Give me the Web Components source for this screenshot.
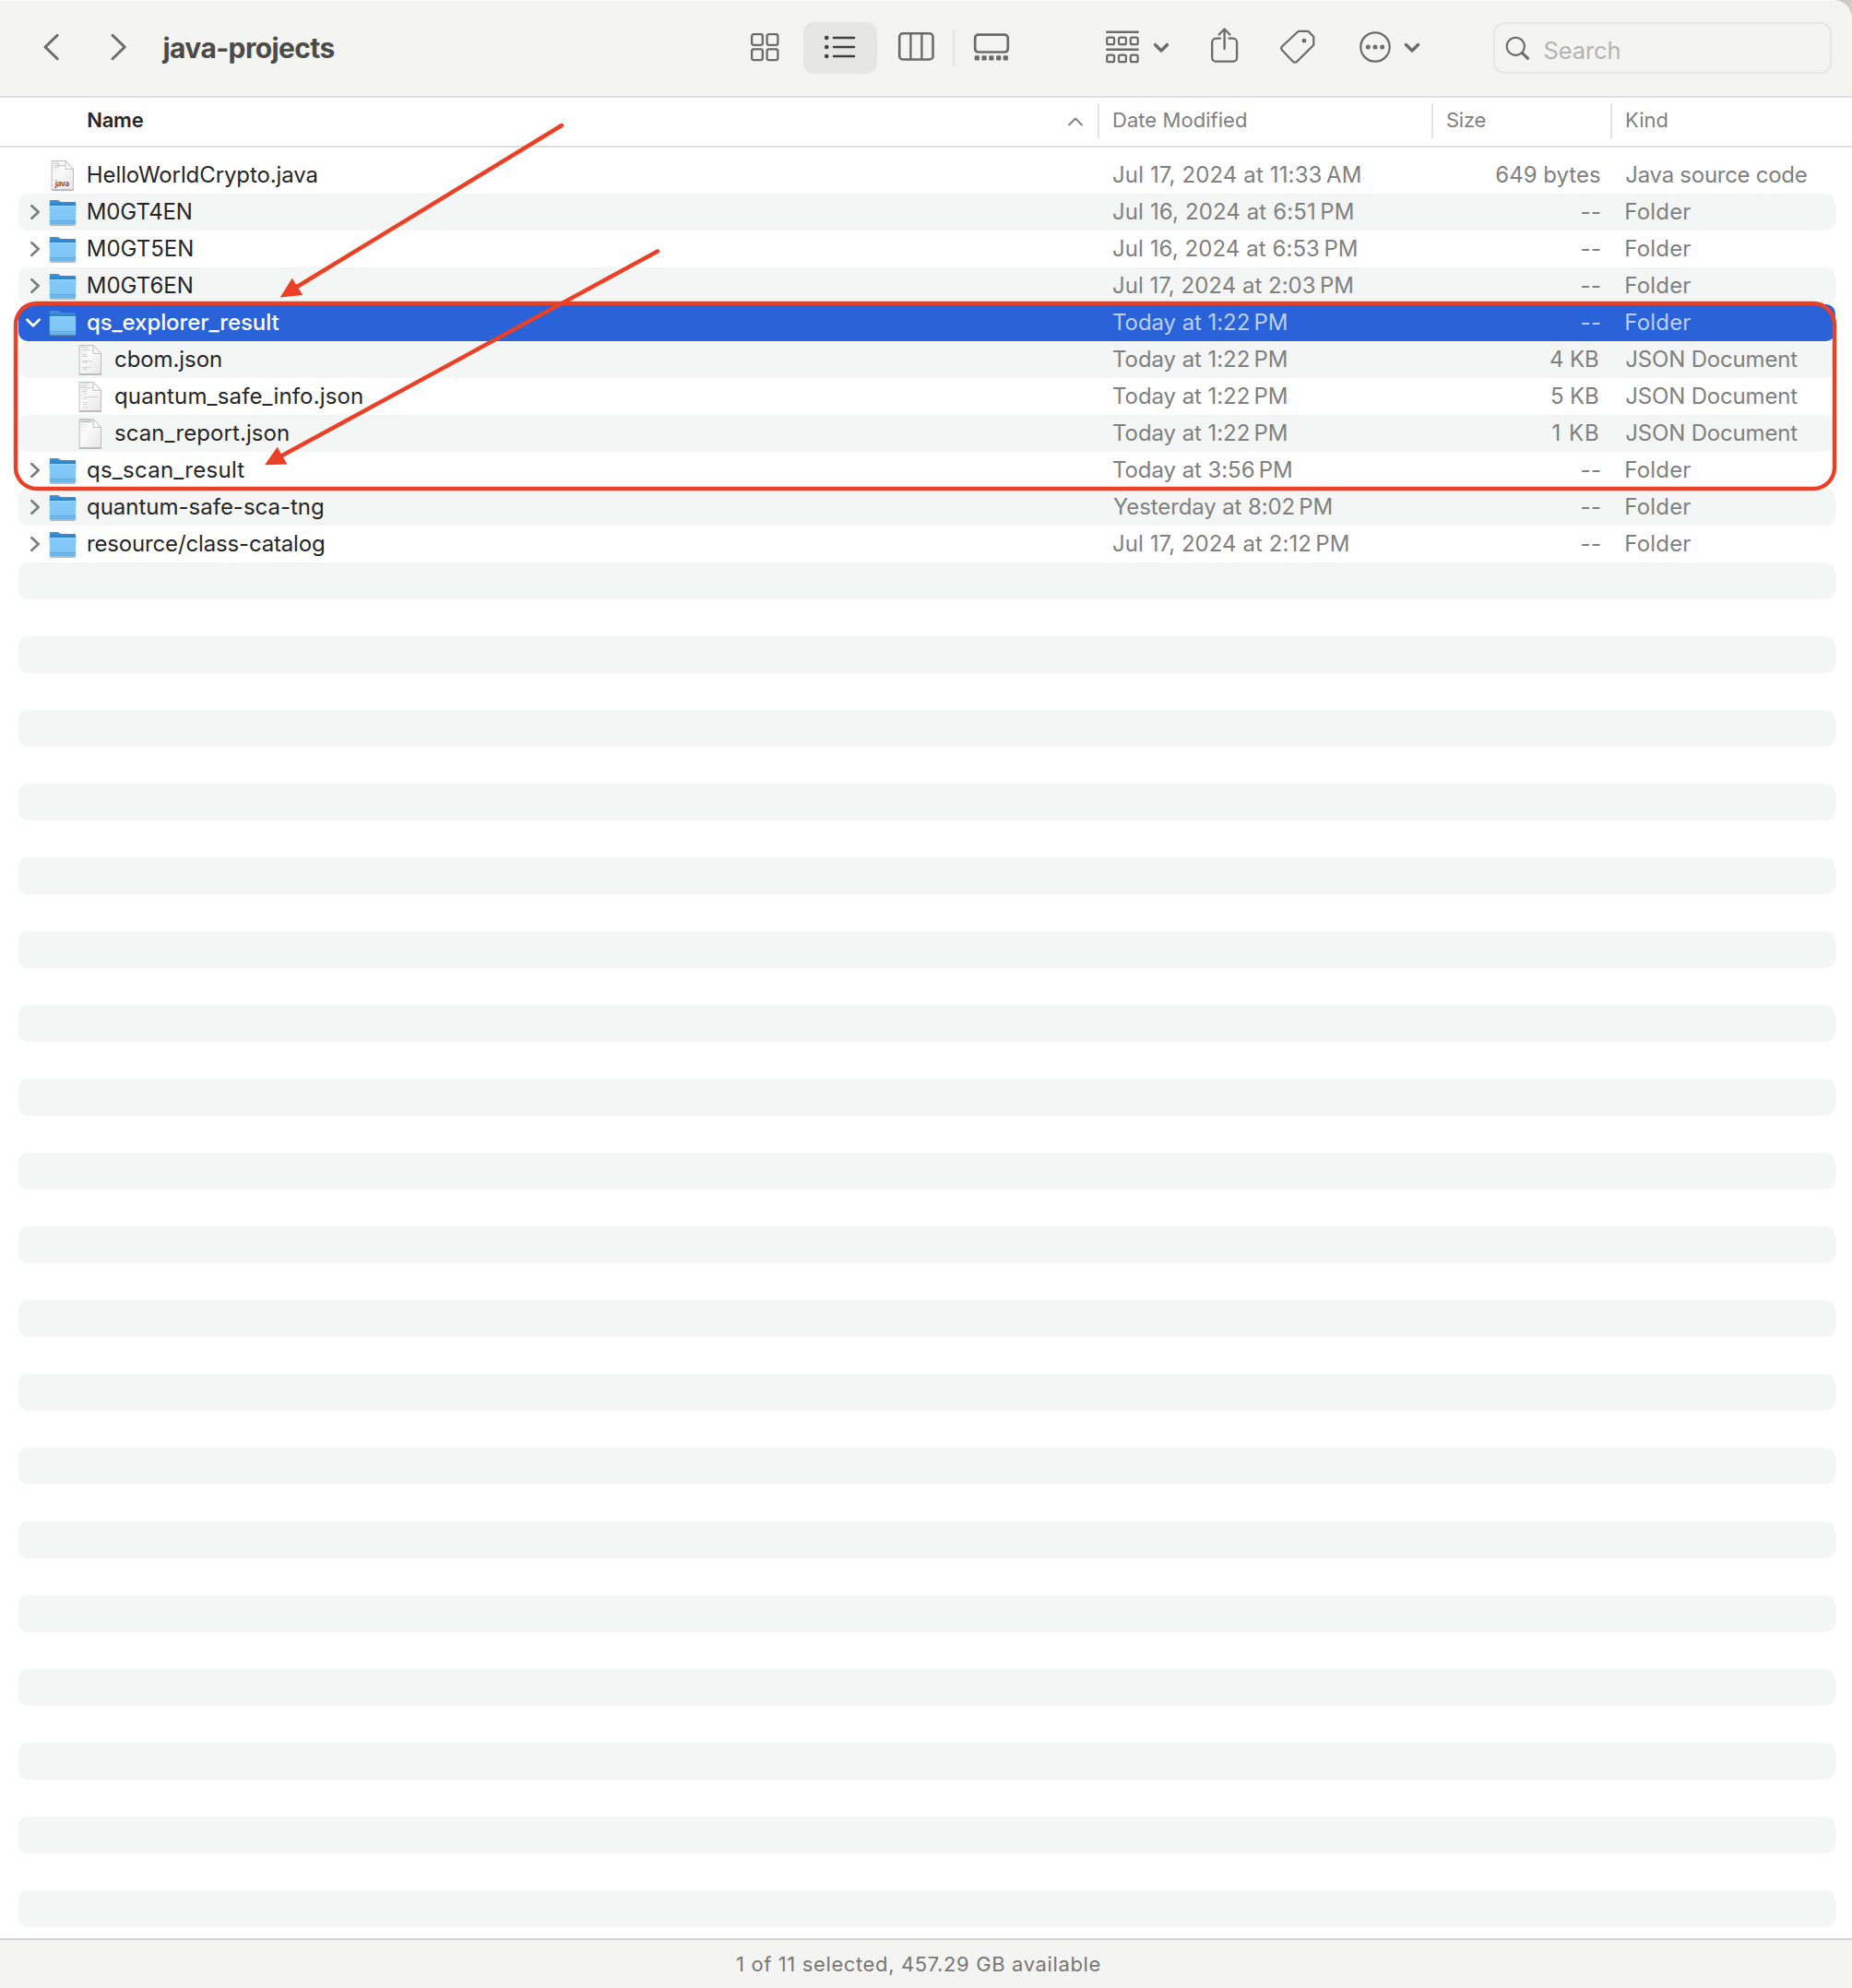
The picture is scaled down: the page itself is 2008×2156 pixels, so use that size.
<!DOCTYPE html>
<html lang="en">
<head>
<meta charset="utf-8">
<title>java-projects</title>
<style>
html,body{margin:0;padding:0;background:#cfccc8}
body{width:2008px;height:2156px;overflow:hidden;font-family:Inter,"Liberation Sans",sans-serif}
</style>
</head>
<body>
<finder-window></finder-window>
<script>
const ctx = document.createElement('canvas').getContext('2d');

// A run of text whose visible width is set by the "ink" attribute.
class FitText extends HTMLElement {
  connectedCallback() {
    const root = this.attachShadow({mode: 'open'});
    root.innerHTML = '<style>:host{display:block;white-space:pre;flex:none}</style><slot></slot>';
    const cs = getComputedStyle(this), text = this.textContent;
    ctx.font = `${cs.fontWeight} ${cs.fontSize} ${cs.fontFamily}`;
    const m = ctx.measureText(text);
    const ink = m.actualBoundingBoxRight + m.actualBoundingBoxLeft;
    const ls = (parseFloat(this.getAttribute('ink')) - ink) / (text.length - 1);
    this.style.letterSpacing = ls.toFixed(4) + 'px';
    this.style.marginLeft = m.actualBoundingBoxLeft.toFixed(3) + 'px';
    this.style.marginRight = (m.actualBoundingBoxRight - m.width - ls).toFixed(3) + 'px';
  }
}

const svg = (w, h, body) => `<svg width="${w}" height="${h}" viewBox="0 0 ${w} ${h}" fill="none" stroke="currentColor" stroke-linecap="round" stroke-linejoin="round">${body}</svg>`;
const doc = extra => svg(32, 36, `
  <defs><linearGradient id="p" x1="0" y1="0" x2="1" y2="1"><stop offset="0" stop-color="#ececec"/><stop offset=".4" stop-color="#fbfbfb"/><stop offset="1" stop-color="#e6e6e6"/></linearGradient></defs>
  <path d="M4.500 34h23" stroke="#8a8a8a" stroke-width="1.600" opacity=".75"/>
  <path d="M4.500 2.500h14l9 9v22h-23z" fill="url(#p)" stroke="#bdbdbd" stroke-width="1"/>
  ${extra}
  <path d="M19 2.800v8.500h8.300z" fill="#fff" stroke="#bdbdbd" stroke-width="1"/>`);
const lines = (ys, c = '#bcbcbc') => ys.map(([x, y, w]) => `<path d="M${x} ${y}h${w}" stroke="${c}" stroke-width=".9" stroke-linecap="butt"/>`).join('');
const ICONS = {
  back: svg(24, 36, '<path d="M18.200 5.250 5 18l13.200 12.750" stroke-width="3"/>'),
  forward: svg(24, 36, '<path d="M5 5.250 18.200 18 5 30.750" stroke-width="3"/>'),
  grid: svg(32, 32, '<g stroke-width="2.300"><rect x="2.150" y="2.150" width="11.700" height="11.700" rx="2"/><rect x="18.650" y="2.150" width="11.700" height="11.700" rx="2"/><rect x="2.150" y="18.350" width="11.700" height="11.700" rx="2"/><rect x="18.650" y="18.350" width="11.700" height="11.700" rx="2"/></g>'),
  list: svg(36, 28, '<g fill="currentColor" stroke="none"><circle cx="3.200" cy="4" r="2.300"/><circle cx="3.200" cy="14" r="2.300"/><circle cx="3.200" cy="24" r="2.300"/></g><path d="M11 4h22M11 14h22M11 24h22" stroke-width="2.600"/>'),
  columns: svg(40, 32, '<rect x="2.200" y="2.200" width="36.300" height="28.300" rx="3.800" stroke-width="2.600"/><path d="M14.400 3v27M26.400 3v27" stroke-width="2.400"/>'),
  gallery: svg(40, 32, '<rect x="2.200" y="2.700" width="35.600" height="18.800" rx="3.500" stroke-width="2.700"/><g fill="currentColor" stroke="none"><rect x="1.700" y="25.300" width="5.200" height="5.200" rx=".8"/><rect x="9.500" y="25.300" width="5.200" height="5.200" rx=".8"/><rect x="17.300" y="25.300" width="5.200" height="5.200" rx=".8"/><rect x="25.100" y="25.300" width="5.200" height="5.200" rx=".8"/><rect x="32.700" y="25.300" width="5.200" height="5.200" rx=".8"/></g>'),
  group: svg(38, 38, `<path d="M2.200 2.800h33.500M2.200 21.800h33.500" stroke-width="2.400"/><g stroke-width="2.200">${[8.6, 27.6].map(y => [2.2, 15, 27.8].map(x => `<rect x="${x}" y="${y}" width="7.900" height="7.600" rx="1.800"/>`).join('')).join('')}</g>`),
  chevron: svg(18, 12, '<path d="m2.500 2.500 6.500 6.500 6.500-6.500" stroke-width="3.300"/>'),
  share: svg(32, 40, '<path d="M11 12.700H6.500a4.300 4.300 0 0 0-4.300 4.300v16.400a4.300 4.300 0 0 0 4.300 4.300h18.300a4.300 4.300 0 0 0 4.300-4.300V17a4.300 4.300 0 0 0-4.300-4.300H20.500M15.600 24V3.500M9.700 8.500l5.900-6 5.900 6" stroke-width="2.300"/>'),
  tag: svg(40, 40, '<path d="m20.300 3.300-17.100 16a3 3 0 0 0 0 4.200l11.700 12.200a3 3 0 0 0 4.300 0l17.600-17.500a2 2 0 0 0 .5-1.300V9.700a2 2 0 0 0-.6-1.400l-4.600-4.800a2 2 0 0 0-1.400-.6h-9a2 2 0 0 0-1.400.4z" stroke-width="2.200"/><circle cx="27" cy="13.200" r="2.400" fill="currentColor" stroke="none"/>'),
  more: svg(36, 36, '<circle cx="18" cy="18" r="15.700" stroke-width="2.200"/><g fill="currentColor" stroke="none"><circle cx="10.300" cy="18" r="2.500"/><circle cx="18" cy="18" r="2.500"/><circle cx="25.700" cy="18" r="2.500"/></g>'),
  search: svg(28, 28, '<circle cx="12.300" cy="12.300" r="9.600" stroke-width="2.100"/><path d="m19.300 19.300 6.300 6" stroke-width="3"/>'),
  sort: svg(18, 12, '<path d="m2 9.500 7-7 7 7" stroke-width="1.900"/>'),
  closed: svg(14, 20, '<path d="m3.400 3.200 7.300 6.800-7.300 6.800" stroke-width="2.700"/>'),
  open: svg(20, 14, '<path d="m3.400 3.700 6.600 6.600 6.600-6.600" stroke-width="2.700"/>'),
  folder: svg(32, 32, `<defs><linearGradient id="b" x1="0" y1="0" x2="0" y2="1"><stop offset="0" stop-color="#3f97da"/><stop offset="1" stop-color="#1f63b4"/></linearGradient><linearGradient id="f" x1="0" y1="0" x2="0" y2="1"><stop offset="0" stop-color="#86cbf8"/><stop offset=".78" stop-color="#7fc6f6"/><stop offset="1" stop-color="#5fade2"/></linearGradient></defs>
    <path d="M3 29.200h26" stroke="#777" stroke-width="1.500" opacity=".5"/>
    <path d="M1.800 14V3.200Q1.800 2.100 3 2.100h7.500q.8 0 1.400.5l1.200 1q.5.500 1.300.5h14.600Q30.200 4.100 30.200 5.300V14z" fill="url(#b)" stroke="none"/>
    <path d="M1.800 8.500h28.400V27.300q0 1.200-1.200 1.200H3Q1.800 28.500 1.800 27.300z" fill="url(#f)" stroke="none"/><path d="M2.500 8.500h27" stroke="#9cd8fb" stroke-width="1"/>
    <path d="M1.800 24.700h28.400" stroke="#4f9dd4" stroke-width="1" stroke-linecap="butt" opacity=".7"/>`),
  java: doc(lines([[7, 5.500, 5], [9, 7.500, 9], [7, 9, 5]]) + '<text x="7.700" y="29.500" font-family="Noto Sans,sans-serif" font-size="8.500" font-weight="600" textLength="15.500" fill="#a8262c" stroke="none">java</text>'),
  json1: doc(lines([[6, 4.500, 8], [7, 7.500, 9], [7, 12.500, 5], [7, 14.500, 6], [7, 19.500, 11], [7, 21, 6], [7, 26.500, 9], [7, 28.500, 5]], '#cbcbcb')),
  json2: doc(lines([[7, 4, 8], [6, 6.500, 6], [5, 8.500, 13], [9, 10.500, 4], [7, 12.500, 5], [9, 15, 4], [8, 18.500, 17], [8, 20.500, 5], [8, 24.500, 5], [8, 26.500, 4], [8, 30, 6]], '#cecece')),
  json3: doc(lines([[5, 4, 13], [6, 5.500, 11]], '#b5b5b5'))
};
class UiIcon extends HTMLElement {
  connectedCallback() {
    this.attachShadow({mode: 'open'}).innerHTML = `<style>:host{display:block;flex:none}svg{display:block}</style>${ICONS[this.getAttribute('name')]}`;
  }
}

class FinderToolbar extends HTMLElement {
  connectedCallback() {
    this.attachShadow({mode: 'open'}).innerHTML = `<style>
      :host{display:flex;height:104px;box-sizing:border-box;background:#f4f4f2;border-top:1px solid #fbfbfb;padding-bottom:1px;color:#6b6b69;align-items:center;flex:none}
      .back{margin:0 0 2.500px 43.500px}.fwd{margin:0 0 2.500px 49px}
      h1{margin:0 0 1px 35px;width:186.500px;font-size:30px;line-height:36px;font-weight:700;color:#4b4b49}
      .views{display:flex;align-items:center;margin-left:451px;flex:none}
      .grid{margin-bottom:3px}
      .on{display:flex;align-items:center;justify-content:center;width:80px;height:56px;border-radius:11px;background:#e6e6e4;color:#3f3f3e;margin:0 22px 0 26px}
      .on ui-icon{margin-bottom:2.400px}
      .columns{margin-bottom:3.400px}
      .sep{width:2px;height:40px;background:#e4e4e2;margin:0 20px}
      .gallery{margin-bottom:3px}
      .group{margin:0 0 2.500px 103px}.c1{margin-left:14px}.share{margin:0 0 5.400px 44px}.tag{margin:0 0 1.500px 42.500px}.more{margin:0 0 2px 46.300px}.c2{margin-left:13.200px}
      .search{display:flex;align-items:center;width:367px;height:56px;box-sizing:border-box;border:2px solid #e6e6e4;border-radius:12px;margin-left:79px;padding-left:10px}
      .search fit-text{color:#b4b4b2;font-size:25.500px;line-height:32px;padding:5px 0 0 15.500px}
    </style>
    <ui-icon class="back" name="back"></ui-icon><ui-icon class="fwd" name="forward"></ui-icon>
    <h1><fit-text ink="187">java-projects</fit-text></h1>
    <div class="views"><ui-icon class="grid" name="grid"></ui-icon><div class="on"><ui-icon name="list"></ui-icon></div><ui-icon class="columns" name="columns"></ui-icon><div class="sep"></div><ui-icon class="gallery" name="gallery"></ui-icon></div>
    <ui-icon class="group" name="group"></ui-icon><ui-icon class="c1" name="chevron"></ui-icon>
    <ui-icon class="share" name="share"></ui-icon><ui-icon class="tag" name="tag"></ui-icon>
    <ui-icon class="more" name="more"></ui-icon><ui-icon class="c2" name="chevron"></ui-icon>
    <div class="search"><ui-icon name="search"></ui-icon><fit-text ink="82">Search</fit-text></div>`;
  }
}

class ColumnHeader extends HTMLElement {
  connectedCallback() {
    this.attachShadow({mode: 'open'}).innerHTML = `<style>
      :host{display:flex;height:56px;box-sizing:border-box;border-top:2px solid #dededd;border-bottom:2px solid #dededd;background:#fff;color:#80807f;font-size:22px;line-height:48px;font-weight:400;flex:none}
      div{box-sizing:border-box;display:flex}
      .name{width:1190px;padding-left:95.200px;color:#262626;font-weight:600;justify-content:space-between}
      .name ui-icon{color:#80807f;margin:20px 15.500px 0 0}
      .col{height:38px;margin-top:6px;border-left:2px solid #e3e3e3;line-height:36px;padding-left:15px}
      .date{width:362px}.size{width:194px}.kind{flex:1}
    </style>
    <div class="name"><fit-text ink="60.500">Name</fit-text><ui-icon name="sort"></ui-icon></div>
    <div class="col date"><fit-text ink="144">Date Modified</fit-text></div>
    <div class="col size"><fit-text ink="41.500">Size</fit-text></div>
    <div class="col kind"><fit-text ink="44.500">Kind</fit-text></div>`;
  }
}

class FileRow extends HTMLElement {
  connectedCallback() {
    const r = this.data, sel = r && r.sel, striped = this.hasAttribute('striped');
    const cell = (cls, v) => `<div class="${cls}"><fit-text ink="${v[1]}">${v[0]}</fit-text></div>`;
    const stem = r && /^[HM]/.test(r.name[0]) ? ' stem' : '';
    this.attachShadow({mode: 'open'}).innerHTML = `<style>
      :host{display:flex;height:40px;line-height:39px;margin:0 18px 0 20px;border-radius:10px;font-size:24px;color:#80807f;flex:none;background:${sel ? '#2962d9' : striped ? '#f4f6f5' : 'transparent'}}
      div{display:flex;box-sizing:border-box;flex:none}
      .toggle{width:32px;height:40px;align-items:center;justify-content:${sel ? 'flex-start' : 'center'};color:#7d7d7c}
      .toggle ui-icon{margin:${sel ? '0 0 0 6px' : '0 0 1px 3.600px'}}
      .icon{width:43px;height:40px;align-items:center}
      .icon.folder{padding-top:2px}
      .name{width:1112px;color:#262626}.date{width:428px}.size{width:100px;justify-content:flex-end}.kind{padding-left:28.300px}
      .stem{padding-left:.8px}
      .child{width:29.500px}
      .child~.name{width:1082.500px;padding-left:.5px}
      .size.kb{padding-right:2px}
      ${sel ? ':host{color:#bccff5}.toggle,.name{color:#fff}.name{font-weight:500}' : ''}
    </style>${r ? `
      <div class="toggle">${r.icon === 'folder' ? `<ui-icon name="${sel ? 'open' : 'closed'}"></ui-icon>` : ''}</div>
      ${r.child ? '<div class="child"></div>' : ''}
      <div class="icon ${r.icon}"><ui-icon name="${r.icon}"></ui-icon></div>
      ${cell('name' + stem, r.name)}${cell('date', r.date)}${cell(r.child ? 'size kb' : 'size', r.size)}${cell('kind', r.kind)}` : ''}`;
  }
}

const FOLDER = ['Folder', 70], JSON_DOC = ['JSON Document', 186], NONE = ['--', 20.5];
const FILES = [
  {icon: 'java', name: ['HelloWorldCrypto.java', 247.8], date: ['Jul 17, 2024 at 11:33\u202fAM', 267.7], size: ['649 bytes', 112.7], kind: ['Java source code', 195.5]},
  {icon: 'folder', name: ['M0GT4EN', 111], date: ['Jul 16, 2024 at 6:51\u202fPM', 259.7], size: NONE, kind: FOLDER},
  {icon: 'folder', name: ['M0GT5EN', 112.5], date: ['Jul 16, 2024 at 6:53\u202fPM', 263.8], size: NONE, kind: FOLDER},
  {icon: 'folder', name: ['M0GT6EN', 112], date: ['Jul 17, 2024 at 2:03\u202fPM', 259.3], size: NONE, kind: FOLDER},
  {icon: 'folder', sel: true, name: ['qs_explorer_result', 207.5], date: ['Today at 1:22\u202fPM', 187.8], size: NONE, kind: FOLDER},
  {icon: 'json1', child: true, name: ['cbom.json', 115], date: ['Today at 1:22\u202fPM', 187.8], size: ['4 KB', 52], kind: JSON_DOC},
  {icon: 'json2', child: true, name: ['quantum_safe_info.json', 268], date: ['Today at 1:22\u202fPM', 187.8], size: ['5 KB', 51], kind: JSON_DOC},
  {icon: 'json3', child: true, name: ['scan_report.json', 188], date: ['Today at 1:22\u202fPM', 187.8], size: ['1 KB', 49.5], kind: JSON_DOC},
  {icon: 'folder', name: ['qs_scan_result', 170.3], date: ['Today at 3:56\u202fPM', 193], size: NONE, kind: FOLDER},
  {icon: 'folder', name: ['quantum-safe-sca-tng', 255], date: ['Yesterday at 8:02\u202fPM', 236.5], size: NONE, kind: FOLDER},
  {icon: 'folder', name: ['resource/class-catalog', 256], date: ['Jul 17, 2024 at 2:12\u202fPM', 254.7], size: NONE, kind: FOLDER}
];
class FileList extends HTMLElement {
  connectedCallback() {
    const root = this.attachShadow({mode: 'open'});
    root.innerHTML = '<style>:host{display:flex;flex-direction:column;flex:1;min-height:0;padding-top:10px;background:#fff;overflow:hidden}</style>';
    for (let i = 0; i < 48; i++) {
      const row = document.createElement('file-row');
      row.data = FILES[i];
      if (i % 2) row.setAttribute('striped', '');
      root.append(row);
    }
  }
}

class StatusBar extends HTMLElement {
  connectedCallback() {
    this.attachShadow({mode: 'open'}).innerHTML = `<style>
      :host{display:flex;box-sizing:border-box;height:54px;border-top:2px solid #d5d5d3;background:#f4f4f2;color:#777775;font-size:22px;line-height:52px;padding-left:799px;flex:none}
    </style><fit-text ink="393.500">1 of 11 selected, 457.29 GB available</fit-text>`;
  }
}

// Red outline and two arrows drawn on top of the list.
class AnnotationLayer extends HTMLElement {
  connectedCallback() {
    this.attachShadow({mode: 'open'}).innerHTML = `<style>:host{display:block;position:absolute;inset:0;pointer-events:none}svg{display:block}</style>
    <svg width="2008" height="2156" viewBox="0 0 2008 2156" fill="none" stroke="#eb4025" stroke-width="4.400" stroke-linecap="round">
      <rect x="17" y="329" width="1972" height="201" rx="23"/>
      <path d="M609 136 322 311M713 272.500 305 494.500"/>
      <path d="m303.700 322.400 13-20.700 11.600 18.400zM287 504.200l13.700-19.500 10.600 18.700z" fill="#eb4025" stroke="none"/>
    </svg>`;
  }
}

class FinderWindow extends HTMLElement {
  connectedCallback() {
    this.attachShadow({mode: 'open'}).innerHTML = `<style>
      :host{display:flex;flex-direction:column;position:relative;width:2008px;height:2156px;overflow:hidden;border-top-right-radius:20px}
    </style><finder-toolbar></finder-toolbar><column-header></column-header><file-list></file-list><status-bar></status-bar><annotation-layer></annotation-layer>`;
  }
}

customElements.define('fit-text', FitText);
customElements.define('ui-icon', UiIcon);
customElements.define('finder-toolbar', FinderToolbar);
customElements.define('column-header', ColumnHeader);
customElements.define('file-row', FileRow);
customElements.define('file-list', FileList);
customElements.define('status-bar', StatusBar);
customElements.define('annotation-layer', AnnotationLayer);
customElements.define('finder-window', FinderWindow);
</script>
</body>
</html>
